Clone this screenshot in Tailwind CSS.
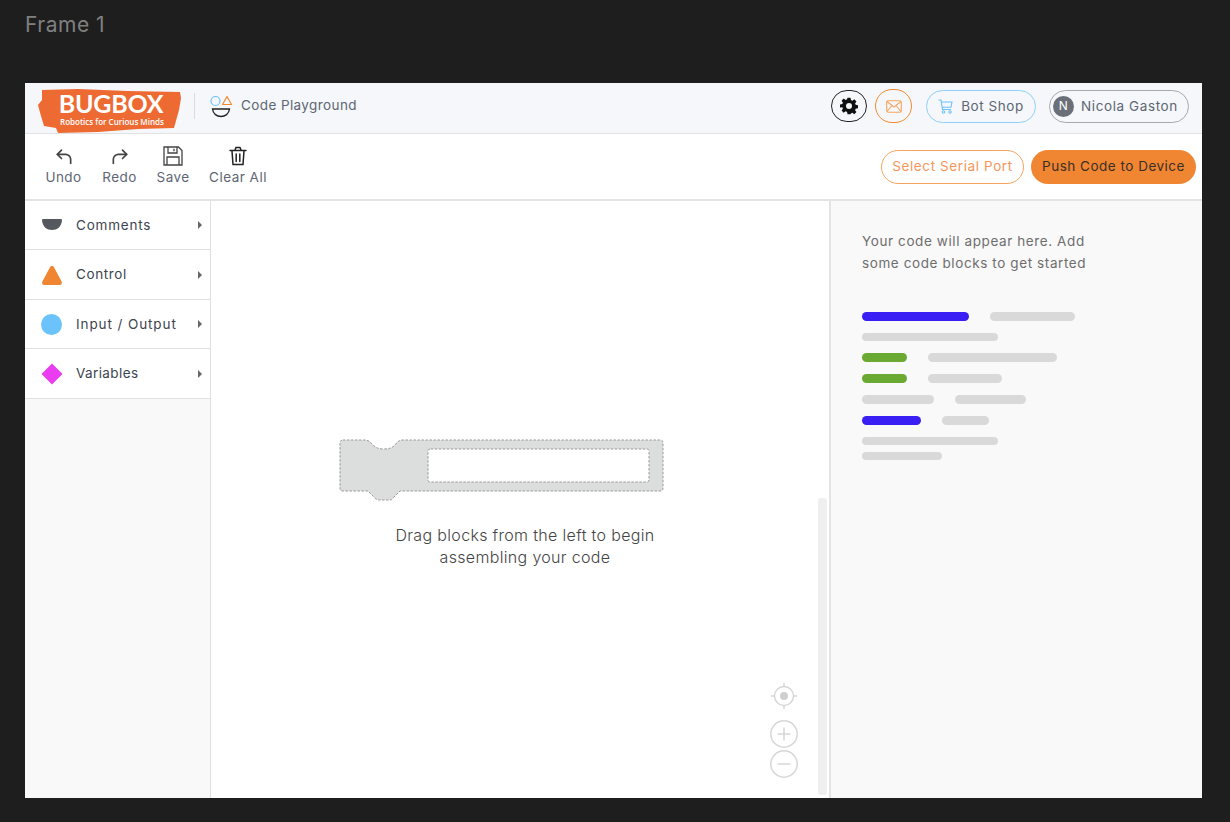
<!DOCTYPE html>
<html>
<head>
<meta charset="utf-8">
<script src="https://cdn.jsdelivr.net/npm/@tailwindcss/browser@4"></script>
</head>
<body class="m-0">
<div class="w-[1230px] h-[822px] bg-[#1e1e1e] overflow-hidden flex flex-col font-['Inter',sans-serif]">
  <div class="h-[83px] pl-[25px] pt-[11px] text-[21px] leading-[28px] tracking-[0.5px] text-[#808080]">Frame 1</div>
  <div class="ml-[25px] w-[1177px] h-[715px] bg-white flex flex-col">
    <header class="h-[51px] shrink-0 bg-[#f5f7fa] border-b border-[#e2e2e2] flex items-center pb-[4px]">
      <svg class="ml-[13px] shrink-0 self-start mt-[5px] relative z-10 overflow-visible" width="144" height="46" viewBox="0 0 144 46">
        <path d="M4 2 L40 1 L90 3 L142 4 L143 10 L141 22 L136 40 L100 41 L60 44 L20 45 L18 40 L6 38 L3 28 L0 17 L4 12 Z" fill="#ee6a33"/>
        <text x="73" y="25" text-anchor="middle" font-family="Lato" font-weight="700" font-size="25" fill="#fff" letter-spacing="-0.2">BUGBOX</text>
        <text x="74" y="37" text-anchor="middle" font-family="Open Sans" font-weight="600" font-size="8" fill="#fff">Robotics for Curious Minds</text>
      </svg>
      <div class="ml-[12px] w-px h-[26px] bg-[#dcdcdc]"></div>
      <svg class="ml-[14px]" width="24" height="24" viewBox="0 0 24 24" fill="none">
        <circle cx="6.5" cy="7" r="4.5" stroke="#6cc2fb" stroke-width="1.2"/>
        <path d="M18 2.5 L22.5 10.5 L13.5 10.5 Z" stroke="#f28a30" stroke-width="1.2" stroke-linejoin="round"/>
        <path d="M3.5 15 H20.5 C20 20 16 22.5 12 22.5 C8 22.5 4 20 3.5 15 Z" stroke="#222" stroke-width="1.3"/>
      </svg>
      <span class="ml-[8px] -mt-[2px] text-[13.5px] tracking-[0.4px] text-[#5e6673]">Code Playground</span>
      <div class="ml-auto mr-[13px] flex items-center">
        <button class="w-[36px] h-[32px] rounded-full border border-[#222] flex items-center justify-center">
          <svg width="18" height="18" viewBox="0 0 24 24" fill="#111"><path fill-rule="evenodd" d="M10 1h4l.6 3.1 1.9.8 2.6-1.8 2.8 2.8-1.8 2.6.8 1.9 3.1.6v4l-3.1.6-.8 1.9 1.8 2.6-2.8 2.8-2.6-1.8-1.9.8L14 23h-4l-.6-3.1-1.9-.8-2.6 1.8-2.8-2.8 1.8-2.6-.8-1.9L0 14v-4l3.1-.6.8-1.9L2.1 4.9 4.9 2.1l2.6 1.8 1.9-.8zM12 8a4 4 0 1 0 0 8 4 4 0 0 0 0-8z"/></svg>
        </button>
        <button class="ml-[8px] w-[37px] h-[34px] rounded-full border border-[#f28a30] flex items-center justify-center">
          <svg width="16" height="13" viewBox="0 0 16 13" fill="none" stroke="#f6a560" stroke-width="1.1"><rect x="0.7" y="0.7" width="14.6" height="11.6" rx="1.5"/><path d="M1 1.5 L8 7 L15 1.5 M1 11.5 L6 5.5 M15 11.5 L10 5.5"/></svg>
        </button>
        <button class="ml-[14px] w-[110px] h-[33px] rounded-full border border-[#8fd0fb] flex items-center justify-center gap-[8px] text-[13.5px] tracking-[0.55px] text-[#5e6673]">
          <svg width="15" height="15" viewBox="0 0 15 15" fill="none" stroke="#6cc2fb" stroke-width="1.1"><path d="M0.5 1 H3 L4.5 10.5 H13 M3.3 3 H14 L13 8.2 H4.2"/><circle cx="5.5" cy="13" r="1.2"/><circle cx="12" cy="13" r="1.2"/></svg>
          Bot Shop
        </button>
        <button class="ml-[13px] w-[140px] h-[33px] rounded-full border-[1.5px] border-[#a5a8ad] flex items-center pl-[3px] gap-[7px] text-[13.5px] tracking-[0.6px] text-[#5e6673]">
          <span class="w-[21px] h-[21px] rounded-full bg-[#6b7078] text-white text-[12px] flex items-center justify-center">N</span>
          Nicola Gaston
        </button>
      </div>
    </header>
    <div class="h-[67px] shrink-0 bg-white border-b-2 border-[#e4e4e4] flex items-center">
      <div class="ml-[20px] w-[37px] pb-[2px] flex flex-col items-center text-[13.5px] tracking-[0.4px] text-[#5e6673]">
        <svg class="mb-[2px]" width="20" height="20" viewBox="0 0 24 24" fill="none" stroke="#444" stroke-width="2" stroke-linecap="round" stroke-linejoin="round"><path d="M9 5 L4 10 L9 15"/><path d="M4 10 H14 A6 6 0 0 1 20 16 V21"/></svg>
        <span class="leading-[18px]">Undo</span>
      </div>
      <div class="ml-[20px] w-[35px] pb-[2px] flex flex-col items-center text-[13.5px] tracking-[0.4px] text-[#5e6673]">
        <svg class="mb-[2px]" width="20" height="20" viewBox="0 0 24 24" fill="none" stroke="#444" stroke-width="2" stroke-linecap="round" stroke-linejoin="round"><path d="M15 5 L20 10 L15 15"/><path d="M20 10 H10 A6 6 0 0 0 4 16 V21"/></svg>
        <span class="leading-[18px]">Redo</span>
      </div>
      <div class="ml-[19px] w-[34px] pb-[2px] flex flex-col items-center text-[13.5px] tracking-[0.4px] text-[#5e6673]">
        <svg class="mb-[2px]" width="20" height="20" viewBox="0 0 20 20" fill="none" stroke="#444" stroke-width="1.3"><path d="M1 1 H15.5 L19 4.5 V19 H1 Z"/><path d="M5 1 V7 H14 V1 M11 2.8 V5.2"/><path d="M4 19 V11 H16 V19"/></svg>
        <span class="leading-[18px]">Save</span>
      </div>
      <div class="ml-[18px] w-[60px] pb-[2px] flex flex-col items-center text-[13.5px] tracking-[0.5px] text-[#5e6673]">
        <svg class="mb-[2px]" width="20" height="20" viewBox="0 0 20 20" fill="none" stroke="#222" stroke-width="1.5" stroke-linecap="round"><path d="M2 4.5 H18 M7 4 L8 1.5 H12 L13 4 M4 5 L5 18.5 H15 L16 5 M8.2 8 V15.5 M11.8 8 V15.5"/></svg>
        <span class="leading-[18px] whitespace-nowrap">Clear All</span>
      </div>
      <div class="ml-auto mr-[6px] flex items-center gap-[7px]">
        <button class="w-[143px] h-[34px] rounded-full border border-[#f6a560] text-[13.5px] tracking-[0.6px] text-[#f6965a]">Select Serial Port</button>
        <button class="w-[165px] h-[34px] rounded-full bg-[#f08532] text-[13.5px] tracking-[0.5px] text-[#3b3026]">Push Code to Device</button>
      </div>
    </div>
    <div class="flex flex-1 min-h-0">
      <aside class="w-[186px] shrink-0 bg-[#f9f9f9] border-r border-[#e0e0e0]">
        <div class="h-[49px] bg-white border-b border-[#e0e0e0] flex items-center pl-[16px] pr-[8px] text-[13.5px] tracking-[0.8px] text-[#3d4450]">
          <svg class="mr-[12px]" width="22" height="22" viewBox="0 0 22 22"><path d="M2 5 H20 Q21 5 21 6 C20.5 13 16 16 11 16 C6 16 1.5 13 1 6 Q1 5 2 5 Z" fill="#55585e"/></svg>
          <span class="ml-px">Comments</span>
          <span class="ml-auto w-0 h-0 border-y-[4px] border-y-transparent border-l-[4px] border-l-[#666]"></span>
        </div>
        <div class="h-[50px] bg-white border-b border-[#e0e0e0] flex items-center pl-[16px] pr-[8px] text-[13.5px] tracking-[0.6px] text-[#3d4450]">
          <svg class="mr-[12px]" width="22" height="22" viewBox="0 0 22 22"><path d="M11 2 C12 2 12.6 2.5 13 3.2 L20.6 17.5 C21.4 19.2 20.6 21 18.6 21 H3.4 C1.4 21 .6 19.2 1.4 17.5 L9 3.2 C9.4 2.5 10 2 11 2 Z" fill="#f08532"/></svg>
          <span class="ml-px">Control</span>
          <span class="ml-auto w-0 h-0 border-y-[4px] border-y-transparent border-l-[4px] border-l-[#666]"></span>
        </div>
        <div class="h-[49px] bg-white border-b border-[#e0e0e0] flex items-center pl-[16px] pr-[8px] text-[13.5px] tracking-[0.9px] text-[#3d4450]">
          <span class="mr-[12px] w-[21px] h-[21px] rounded-full bg-[#6cc2fb] block"></span>
          <span class="ml-[2px]">Input / Output</span>
          <span class="ml-auto w-0 h-0 border-y-[4px] border-y-transparent border-l-[4px] border-l-[#666]"></span>
        </div>
        <div class="h-[50px] bg-white border-b border-[#e0e0e0] flex items-center pl-[16px] pr-[8px] text-[13.5px] tracking-[0.4px] text-[#3d4450]">
          <svg class="mr-[12px]" width="22" height="22" viewBox="0 0 22 22"><path d="M11 .5 L21.5 11 L11 21.5 L.5 11 Z" fill="#ea3cf0"/></svg>
          <span class="ml-px">Variables</span>
          <span class="ml-auto w-0 h-0 border-y-[4px] border-y-transparent border-l-[4px] border-l-[#666]"></span>
        </div>
      </aside>
      <main class="relative w-[618px] shrink-0 bg-white pt-[237px] pl-[127px]">
        <svg class="block" width="328" height="64" viewBox="0 0 328 64" fill="none">
          <path fill-rule="evenodd" d="M5 2 H27 C31 2 33 5 35 7 C38 10 41 11 46 11 C51 11 54 10 57 7 C59 4 61 2 65 2 H322 Q325 2 325 5 V50 Q325 53 322 53 H62 L55 60 Q54 62 52 62 H41 Q39 62 37 60 L30 53 H5 Q2 53 2 50 V5 Q2 2 5 2 Z M92 11 Q90 11 90 13 V42 Q90 44 92 44 H309 Q311 44 311 42 V13 Q311 11 309 11 Z" fill="#dcdedd" stroke="#9a9a9a" stroke-width="1" stroke-dasharray="2.5 1.5"/>
        </svg>
        <p class="mt-[22px] ml-[24px] w-[326px] text-center text-[16px] leading-[22px] tracking-[0.33px] font-light text-[#444]">Drag blocks from the left to begin<br>assembling your code</p>
        <div class="absolute left-[607px] top-[297px] w-[9px] h-[297px] rounded-[3px] bg-[#efefef]"></div>
        <svg class="absolute left-[559px] top-[481px]" width="28" height="28" viewBox="0 0 28 28" fill="none" stroke="#d6d6d6" stroke-width="1.4"><circle cx="14" cy="14" r="9.5"/><circle cx="14" cy="14" r="4" fill="#cfcfcf" stroke="none"/><path d="M14 1 V4.5 M14 23.5 V27 M1 14 H4.5 M23.5 14 H27"/></svg>
        <svg class="absolute left-[558px] top-[518px]" width="30" height="30" viewBox="0 0 30 30" fill="none" stroke="#d6d6d6" stroke-width="1.5"><circle cx="15" cy="15" r="13.2"/><path d="M8.5 15 H21.5 M15 8.5 V21.5"/></svg>
        <svg class="absolute left-[558px] top-[548px]" width="30" height="30" viewBox="0 0 30 30" fill="none" stroke="#d6d6d6" stroke-width="1.5"><circle cx="15" cy="15" r="13.2"/><path d="M8.5 15 H21.5"/></svg>
      </main>
      <section class="flex-1 bg-[#f9f9f9] border-l-2 border-[#e4e4e4] pl-[31px] pt-[30px]">
        <p class="text-[13.5px] leading-[21.5px] tracking-[0.6px] text-[#6e6e6e] whitespace-nowrap">Your code will appear here. Add<br>some code blocks to get started</p>
        <div class="mt-[38px] flex flex-col gap-[12px]">
          <div class="flex gap-[21px]"><div class="w-[107px] h-[9px] rounded-full bg-[#3a1ff5]"></div><div class="w-[85px] h-[9px] rounded-full bg-[#d9d9d9]"></div></div>
          <div class="flex gap-[21px]"><div class="w-[136px] h-[8px] rounded-full bg-[#d9d9d9]"></div></div>
          <div class="flex gap-[21px]"><div class="w-[45px] h-[9px] rounded-full bg-[#6aaa32]"></div><div class="w-[129px] h-[9px] rounded-full bg-[#d9d9d9]"></div></div>
          <div class="flex gap-[21px]"><div class="w-[45px] h-[9px] rounded-full bg-[#6aaa32]"></div><div class="w-[74px] h-[9px] rounded-full bg-[#d9d9d9]"></div></div>
          <div class="flex gap-[21px]"><div class="w-[72px] h-[9px] rounded-full bg-[#d9d9d9]"></div><div class="w-[71px] h-[9px] rounded-full bg-[#d9d9d9]"></div></div>
          <div class="flex gap-[21px]"><div class="w-[59px] h-[9px] rounded-full bg-[#3a1ff5]"></div><div class="w-[47px] h-[9px] rounded-full bg-[#d9d9d9]"></div></div>
          <div class="flex flex-col gap-[7px]"><div class="w-[136px] h-[8px] rounded-full bg-[#d9d9d9]"></div><div class="w-[80px] h-[8px] rounded-full bg-[#d9d9d9]"></div></div>
        </div>
      </section>
    </div>
  </div>
</div>
</body>
</html>
